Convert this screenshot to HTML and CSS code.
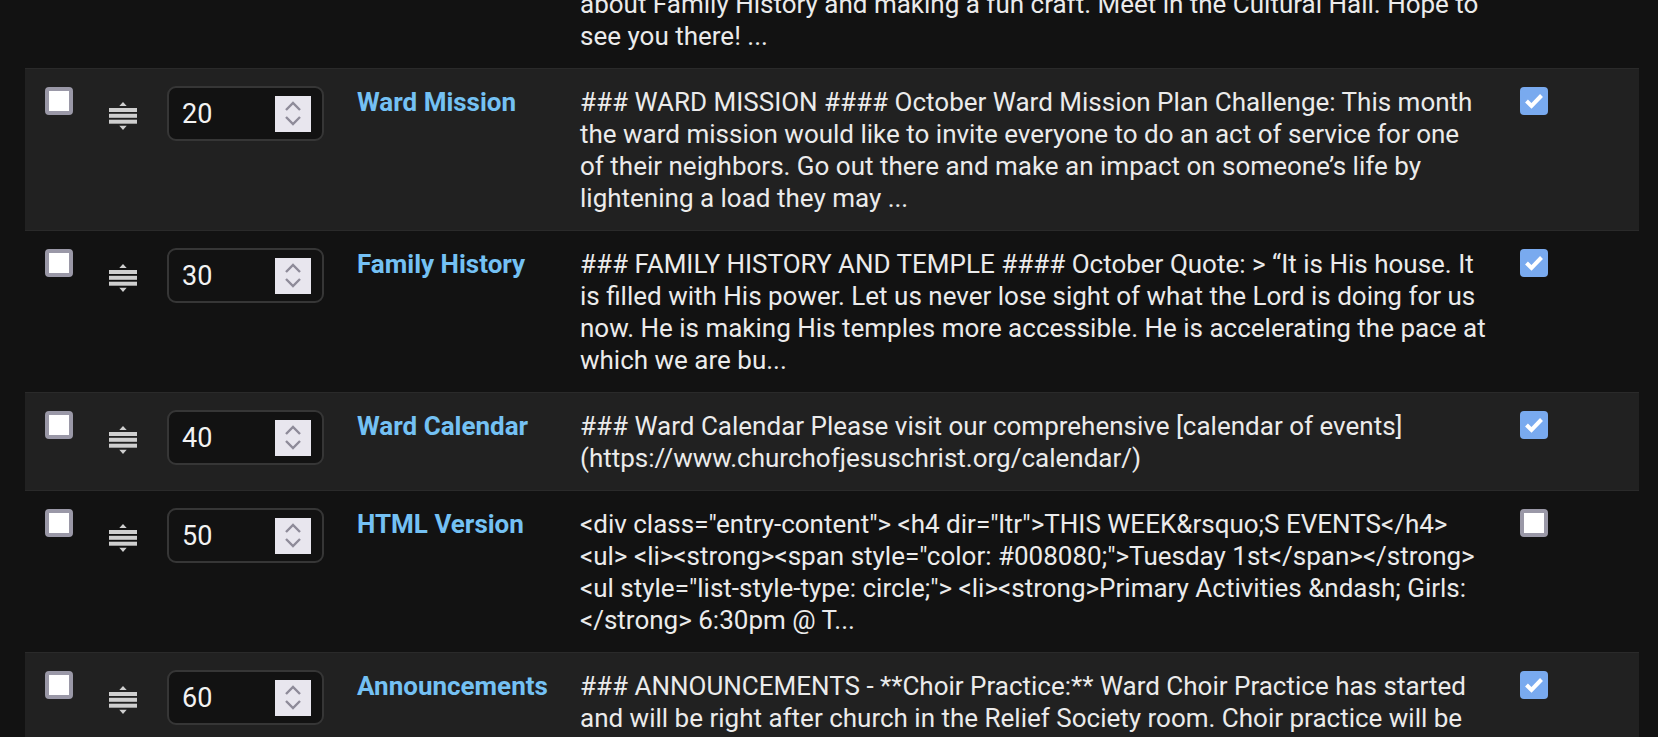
FILE: index.html
```html
<!DOCTYPE html>
<html lang="en">
<head>
<meta charset="utf-8">
<title>Sections</title>
<link rel="stylesheet" href="styles.css">
</head>
<body>
<div class="table">
  <div class="row">
    <div class="c-sel"><span class="cb"></span></div>
    <div class="c-drag"><svg class="grip" viewBox="0 0 28 28"><path d="M14 0 L17.7 4 L10.3 4 Z M14 28 L17.7 23.8 L10.3 23.8 Z" fill="#cfcfcf"/><rect x="0" y="6" width="28" height="4" fill="#cfcfcf"/><rect x="0" y="11.8" width="28" height="4" fill="#cfcfcf"/><rect x="0" y="17.7" width="28" height="4" fill="#cfcfcf"/></svg></div>
    <div class="c-num"><div class="num"><span class="val">10</span><span class="spin"><svg viewBox="0 0 36 36"><path d="M11 14 L18 7 L25 14 M11 21 L18 28 L25 21" fill="none" stroke="#8e8b99" stroke-width="2.4"/></svg></span></div></div>
    <div class="c-title">Primary</div>
    <div class="c-desc">### PRIMARY #### October Primary Activity: All Primary children are invited to join us on Saturday morning for an hour of learning<br>about Family History and making a fun craft. Meet in the Cultural Hall. Hope to see you there! ...</div>
    <div class="c-show"><span class="cb on"><svg viewBox="0 0 28 28"><path d="M6.5 14 L11.5 19 L21.5 8.5" fill="none" stroke="#fff" stroke-width="4"/></svg></span></div>
  </div>

  <div class="row alt">
    <div class="c-sel"><span class="cb"></span></div>
    <div class="c-drag"><svg class="grip" viewBox="0 0 28 28"><path d="M14 0 L17.7 4 L10.3 4 Z M14 28 L17.7 23.8 L10.3 23.8 Z" fill="#cfcfcf"/><rect x="0" y="6" width="28" height="4" fill="#cfcfcf"/><rect x="0" y="11.8" width="28" height="4" fill="#cfcfcf"/><rect x="0" y="17.7" width="28" height="4" fill="#cfcfcf"/></svg></div>
    <div class="c-num"><div class="num"><span class="val">20</span><span class="spin"><svg viewBox="0 0 36 36"><path d="M11 14 L18 7 L25 14 M11 21 L18 28 L25 21" fill="none" stroke="#8e8b99" stroke-width="2.4"/></svg></span></div></div>
    <div class="c-title">Ward Mission</div>
    <div class="c-desc">### WARD MISSION #### October Ward Mission Plan Challenge: This month the ward mission would like to invite everyone to do an act of service for one of their neighbors. Go out there and make an impact on someone’s life by lightening a load they may ...</div>
    <div class="c-show"><span class="cb on"><svg viewBox="0 0 28 28"><path d="M6.5 14 L11.5 19 L21.5 8.5" fill="none" stroke="#fff" stroke-width="4"/></svg></span></div>
  </div>

  <div class="row">
    <div class="c-sel"><span class="cb"></span></div>
    <div class="c-drag"><svg class="grip" viewBox="0 0 28 28"><path d="M14 0 L17.7 4 L10.3 4 Z M14 28 L17.7 23.8 L10.3 23.8 Z" fill="#cfcfcf"/><rect x="0" y="6" width="28" height="4" fill="#cfcfcf"/><rect x="0" y="11.8" width="28" height="4" fill="#cfcfcf"/><rect x="0" y="17.7" width="28" height="4" fill="#cfcfcf"/></svg></div>
    <div class="c-num"><div class="num"><span class="val">30</span><span class="spin"><svg viewBox="0 0 36 36"><path d="M11 14 L18 7 L25 14 M11 21 L18 28 L25 21" fill="none" stroke="#8e8b99" stroke-width="2.4"/></svg></span></div></div>
    <div class="c-title">Family History</div>
    <div class="c-desc">### FAMILY HISTORY AND TEMPLE #### October Quote: &gt; “It is His house. It is filled with His power. Let us never lose sight of what the Lord is doing for us now. He is making His temples more accessible. He is accelerating the pace at which we are bu...</div>
    <div class="c-show"><span class="cb on"><svg viewBox="0 0 28 28"><path d="M6.5 14 L11.5 19 L21.5 8.5" fill="none" stroke="#fff" stroke-width="4"/></svg></span></div>
  </div>

  <div class="row alt">
    <div class="c-sel"><span class="cb"></span></div>
    <div class="c-drag"><svg class="grip" viewBox="0 0 28 28"><path d="M14 0 L17.7 4 L10.3 4 Z M14 28 L17.7 23.8 L10.3 23.8 Z" fill="#cfcfcf"/><rect x="0" y="6" width="28" height="4" fill="#cfcfcf"/><rect x="0" y="11.8" width="28" height="4" fill="#cfcfcf"/><rect x="0" y="17.7" width="28" height="4" fill="#cfcfcf"/></svg></div>
    <div class="c-num"><div class="num"><span class="val">40</span><span class="spin"><svg viewBox="0 0 36 36"><path d="M11 14 L18 7 L25 14 M11 21 L18 28 L25 21" fill="none" stroke="#8e8b99" stroke-width="2.4"/></svg></span></div></div>
    <div class="c-title">Ward Calendar</div>
    <div class="c-desc">### Ward Calendar Please visit our comprehensive [calendar of events](https://www.churchofjesuschrist.org/calendar/)</div>
    <div class="c-show"><span class="cb on"><svg viewBox="0 0 28 28"><path d="M6.5 14 L11.5 19 L21.5 8.5" fill="none" stroke="#fff" stroke-width="4"/></svg></span></div>
  </div>

  <div class="row">
    <div class="c-sel"><span class="cb"></span></div>
    <div class="c-drag"><svg class="grip" viewBox="0 0 28 28"><path d="M14 0 L17.7 4 L10.3 4 Z M14 28 L17.7 23.8 L10.3 23.8 Z" fill="#cfcfcf"/><rect x="0" y="6" width="28" height="4" fill="#cfcfcf"/><rect x="0" y="11.8" width="28" height="4" fill="#cfcfcf"/><rect x="0" y="17.7" width="28" height="4" fill="#cfcfcf"/></svg></div>
    <div class="c-num"><div class="num"><span class="val">50</span><span class="spin"><svg viewBox="0 0 36 36"><path d="M11 14 L18 7 L25 14 M11 21 L18 28 L25 21" fill="none" stroke="#8e8b99" stroke-width="2.4"/></svg></span></div></div>
    <div class="c-title">HTML Version</div>
    <div class="c-desc">&lt;div class="entry-content"&gt; &lt;h4 dir="ltr"&gt;THIS WEEK&amp;rsquo;S EVENTS&lt;/h4&gt; &lt;ul&gt; &lt;li&gt;&lt;strong&gt;&lt;span style="color: #008080;"&gt;Tuesday 1st&lt;/span&gt;&lt;/strong&gt; &lt;ul style="list-style-type: circle;"&gt; &lt;li&gt;&lt;strong&gt;Primary Activities &amp;ndash; Girls:&lt;/strong&gt; 6:30pm @ T...</div>
    <div class="c-show"><span class="cb"></span></div>
  </div>

  <div class="row alt">
    <div class="c-sel"><span class="cb"></span></div>
    <div class="c-drag"><svg class="grip" viewBox="0 0 28 28"><path d="M14 0 L17.7 4 L10.3 4 Z M14 28 L17.7 23.8 L10.3 23.8 Z" fill="#cfcfcf"/><rect x="0" y="6" width="28" height="4" fill="#cfcfcf"/><rect x="0" y="11.8" width="28" height="4" fill="#cfcfcf"/><rect x="0" y="17.7" width="28" height="4" fill="#cfcfcf"/></svg></div>
    <div class="c-num"><div class="num"><span class="val">60</span><span class="spin"><svg viewBox="0 0 36 36"><path d="M11 14 L18 7 L25 14 M11 21 L18 28 L25 21" fill="none" stroke="#8e8b99" stroke-width="2.4"/></svg></span></div></div>
    <div class="c-title">Announcements</div>
    <div class="c-desc">### ANNOUNCEMENTS - **Choir Practice:** Ward Choir Practice has started and will be right after church in the Relief Society room. Choir practice will be held every Sunday for the rest of the year. Come join us! ...</div>
    <div class="c-show"><span class="cb on"><svg viewBox="0 0 28 28"><path d="M6.5 14 L11.5 19 L21.5 8.5" fill="none" stroke="#fff" stroke-width="4"/></svg></span></div>
  </div>
</div>
</body>
</html>
```
FILE: styles.css
```css
html, body {
  margin: 0;
  padding: 0;
  background: #121212;
  overflow: hidden;
  height: 737px;
}
body {
  font-family: Roboto, "Liberation Sans", sans-serif;
  color: #ebebeb;
}
.table {
  margin: -94px 19px 0 25px;
}
.row {
  display: grid;
  grid-template-columns: 64px 58px 190px 223px 940px 1fr;
  align-items: start;
  padding: 17px 0 16px 20px;
  border-top: 1px solid #2a2a2a;
  background: #121212;
}
.row.alt {
  background: #212121;
}
.c-sel, .c-show {
  padding-top: 1px;
}
.c-drag {
  padding-top: 16px;
}
.grip {
  display: block;
  width: 28px;
  height: 28px;
}
.cb {
  display: block;
  box-sizing: border-box;
  width: 28px;
  height: 28px;
  border: 4px solid #9a98a7;
  border-radius: 4px;
  background: #ffffff;
}
.cb.on {
  border: none;
  background: #79aaef;
}
.cb svg {
  display: block;
  width: 28px;
  height: 28px;
}
.num {
  box-sizing: border-box;
  width: 157px;
  height: 55px;
  border: 2px solid #363636;
  border-radius: 9px;
  background: #121212;
  display: flex;
  align-items: center;
  justify-content: space-between;
  padding: 0 11px 0 13px;
}
.val {
  font-size: 27px;
  color: #f2f2f2;
}
.spin {
  display: block;
  width: 36px;
  height: 36px;
  background: #e8e6ee;
}
.spin svg {
  display: block;
  width: 36px;
  height: 36px;
}
.c-title {
  font-size: 26px;
  font-weight: 700;
  line-height: 32px;
  color: #74c1f4;
}
.c-desc {
  font-size: 26px;
  line-height: 32px;
  padding-right: 33px;
  overflow-wrap: break-word;
}
```
